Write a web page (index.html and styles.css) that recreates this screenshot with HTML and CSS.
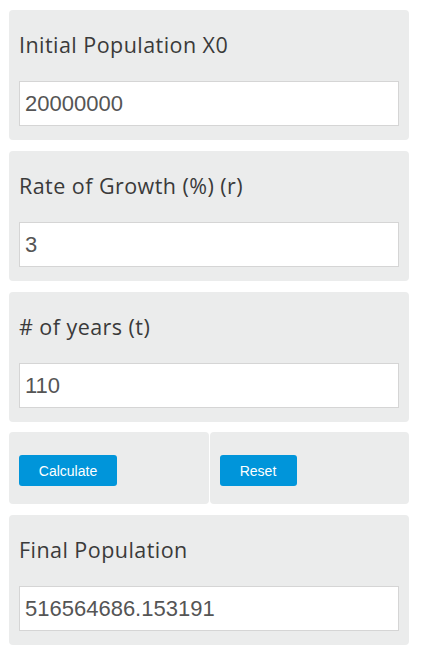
FILE: index.html
```html
<!DOCTYPE html>
<html>
<head>
<meta charset="utf-8">
<link rel="stylesheet" href="styles.css">
</head>
<body>
<div class="calc">
  <div class="card">
    <label class="label">Initial Population X0</label>
    <input class="field" type="text" value="20000000">
  </div>
  <div class="card">
    <label class="label">Rate of Growth (%) (r)</label>
    <input class="field" type="text" value="3">
  </div>
  <div class="card">
    <label class="label"># of years (t)</label>
    <input class="field" type="text" value="110">
  </div>
  <div class="btn-row">
    <div class="half"><button class="btn btn-calc">Calculate</button></div>
    <div class="half"><button class="btn btn-reset">Reset</button></div>
  </div>
  <div class="card">
    <label class="label">Final Population</label>
    <input class="field" type="text" value="516564686.153191">
  </div>
</div>
</body>
</html>
```
FILE: styles.css
```css
html, body {
  margin: 0;
  padding: 0;
  background: #fff;
}
.calc {
  width: 400px;
  margin: 10px 0 0 9px;
  display: flex;
  flex-direction: column;
  gap: 11px;
}
.card {
  background: #ebecec;
  border-radius: 4px;
  height: 130px;
  box-sizing: border-box;
  padding: 22px 10px 0 10px;
  display: flex;
  flex-direction: column;
}
.label {
  font-family: "Open Sans", sans-serif;
  font-size: 21.5px;
  letter-spacing: 0.45px;
  color: #3a3a3a;
  line-height: 26px;
  height: 26px;
  margin-bottom: 23px;
}
.field {
  width: 380px;
  height: 45px;
  box-sizing: border-box;
  border: 1px solid #d5d5d5;
  background: #fff;
  padding: 0 5px;
  font-family: "Liberation Sans", Arial, sans-serif;
  font-size: 22px;
  color: #555;
  outline: none;
  margin: 0;
}
.btn-row {
  display: flex;
  gap: 1px;
  height: 72px;
  margin-top: -1px;
}
.half {
  flex: 1;
  background: #ebecec;
  border-radius: 4px;
  padding: 0 10px;
  display: flex;
  align-items: center;
}
.btn {
  background: #0095da;
  color: #fff;
  border: none;
  border-radius: 3px;
  height: 31px;
  font-family: "Liberation Sans", Arial, sans-serif;
  font-size: 14px;
  padding: 0;
  margin-top: 5px;
}
.btn-calc { width: 98px; }
.btn-reset { width: 77px; }
```
